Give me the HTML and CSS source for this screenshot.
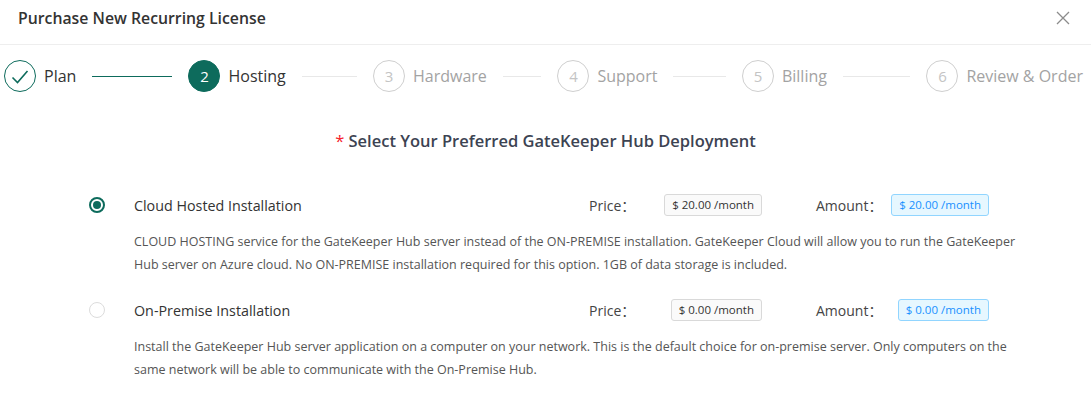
FILE: index.html
```html
<!DOCTYPE html>
<html>
<head>
<meta charset="utf-8">
<link rel="stylesheet" href="styles.css">
</head>
<body>
<div class="modal">
  <div class="header">
    <div class="title">Purchase New Recurring License</div>
    <div class="close" aria-label="Close">
      <svg width="14" height="14" viewBox="0 0 14 14"><path d="M1 1 L13 13 M13 1 L1 13" stroke="#8c8c8c" stroke-width="1.3" fill="none"/></svg>
    </div>
  </div>

  <div class="steps">
    <div class="step done">
      <div class="icon"><svg width="18" height="16" viewBox="0 0 18 16"><path d="M1.5 8.5 L6.5 13.5 L16.5 2" stroke="#0d6b5c" stroke-width="1.6" fill="none"/></svg></div>
      <div class="label">Plan</div>
      <div class="line"></div>
    </div>
    <div class="step active">
      <div class="icon">2</div>
      <div class="label">Hosting</div>
      <div class="line"></div>
    </div>
    <div class="step">
      <div class="icon">3</div>
      <div class="label">Hardware</div>
      <div class="line"></div>
    </div>
    <div class="step">
      <div class="icon">4</div>
      <div class="label">Support</div>
      <div class="line"></div>
    </div>
    <div class="step">
      <div class="icon">5</div>
      <div class="label">Billing</div>
      <div class="line"></div>
    </div>
    <div class="step last">
      <div class="icon">6</div>
      <div class="label">Review &amp; Order</div>
    </div>
  </div>

  <h2 class="heading"><span class="req">*</span> Select Your Preferred GateKeeper Hub Deployment</h2>

  <div class="options">
    <div class="option">
      <div class="row">
        <span class="radio checked"></span>
        <span class="opt-name">Cloud Hosted Installation</span>
        <span class="lbl price-lbl">Price：</span>
        <span class="tag-col"><span class="tag">$ 20.00 /month</span></span>
        <span class="lbl amt-lbl">Amount：</span>
        <span class="tag-col"><span class="tag blue">$ 20.00 /month</span></span>
      </div>
      <p class="desc">CLOUD HOSTING service for the GateKeeper Hub server instead of the ON-PREMISE installation. GateKeeper Cloud will allow you to run the GateKeeper Hub server on Azure cloud. No ON-PREMISE installation required for this option. 1GB of data storage is included.</p>
    </div>
    <div class="option">
      <div class="row">
        <span class="radio"></span>
        <span class="opt-name">On-Premise Installation</span>
        <span class="lbl price-lbl">Price：</span>
        <span class="tag-col"><span class="tag">$ 0.00 /month</span></span>
        <span class="lbl amt-lbl">Amount：</span>
        <span class="tag-col"><span class="tag blue">$ 0.00 /month</span></span>
      </div>
      <p class="desc">Install the GateKeeper Hub server application on a computer on your network. This is the default choice for on-premise server. Only computers on the same network will be able to communicate with the On-Premise Hub.</p>
    </div>
  </div>
</div>
</body>
</html>
```

FILE: styles.css
```css
* { box-sizing: border-box; }
html, body { margin: 0; padding: 0; background: #fff; }
body {
  font-family: "Open Sans", "Noto Sans", sans-serif;
  color: #333;
  width: 1091px;
  height: 400px;
  overflow: hidden;
}
.header {
  height: 45px;
  border-bottom: 1px solid #eeeeee;
  display: flex;
  align-items: flex-start;
  justify-content: space-between;
  padding: 7px 21px 0 18px;
}
.title {
  font-size: 15.8px;
  font-weight: 600;
  line-height: 22px;
  color: #333;
}
.close { padding-top: 4px; }
.close svg { display: block; }

.steps {
  display: flex;
  margin-top: 15px;
  padding: 0 8px 0 4px;
}
.step {
  flex: 1 1 0;
  display: flex;
  align-items: center;
  padding-left: 16px;
  min-width: 0;
}
.step:first-child { padding-left: 0; }
.step.last { flex: 0 0 auto; }
.icon {
  width: 32px;
  height: 32px;
  border-radius: 50%;
  border: 1px solid #cfcfcf;
  color: #c4c4c4;
  font-size: 15px;
  display: flex;
  align-items: center;
  justify-content: center;
  flex: none;
  margin-right: 8px;
}
.done .icon { border-color: #0d6b5c; }
.done .icon svg { display: block; margin-top: 1px; }
.active .icon { background: #0d6b5c; border-color: #0d6b5c; color: #fff; }
.label {
  font-size: 16px;
  line-height: 32px;
  color: #a3a3a3;
  white-space: nowrap;
  flex: none;
}
.done .label, .active .label { color: #333; }
.line {
  flex: 1;
  height: 1px;
  background: #e8e8e8;
  margin-left: 16px;
}
.done .line { background: #0d6b5c; }

.heading {
  margin: 37px 0 0;
  text-align: center;
  font-size: 16.5px;
  font-weight: 600;
  line-height: 24px;
  color: #3c4352;
}
.req { color: #f5222d; font-weight: 400; }

.options { padding: 40px 0 0 89px; }
.option { margin-bottom: 22px; }
.row {
  display: flex;
  align-items: center;
  height: 24px;
}
.radio {
  width: 16px;
  height: 16px;
  border-radius: 50%;
  border: 1px solid #dcdcdc;
  flex: none;
  position: relative;
}
.radio.checked { border: 2px solid #0d6b5c; }
.radio.checked::after {
  content: "";
  position: absolute;
  left: 2px; top: 2px;
  width: 8px; height: 8px;
  border-radius: 50%;
  background: #0d6b5c;
}
.opt-name {
  margin-left: 29px;
  width: 455px;
  font-size: 14.3px;
  color: #333;
  flex: none;
}
.lbl {
  font-family: "Open Sans", "Noto Sans CJK SC", sans-serif;
  font-size: 14px;
  color: #444;
  flex: none;
}
.price-lbl { width: 76px; }
.amt-lbl { width: 76px; margin-left: 54px; }
.tag-col { width: 97px; display: flex; justify-content: flex-end; flex: none; }
.tag {
  display: inline-block;
  height: 22px;
  line-height: 20px;
  padding: 0 7px;
  font-size: 11.5px;
  border: 1px solid #d9d9d9;
  border-radius: 3px;
  background: #fafafa;
  color: #333;
  white-space: nowrap;
}
.tag.blue { background: #e6f7ff; border-color: #91d5ff; color: #1890ff; }
.desc {
  margin: 13px 0 0 45px;
  width: 895px;
  font-size: 12.5px;
  line-height: 23px;
  color: #555;
}
```
